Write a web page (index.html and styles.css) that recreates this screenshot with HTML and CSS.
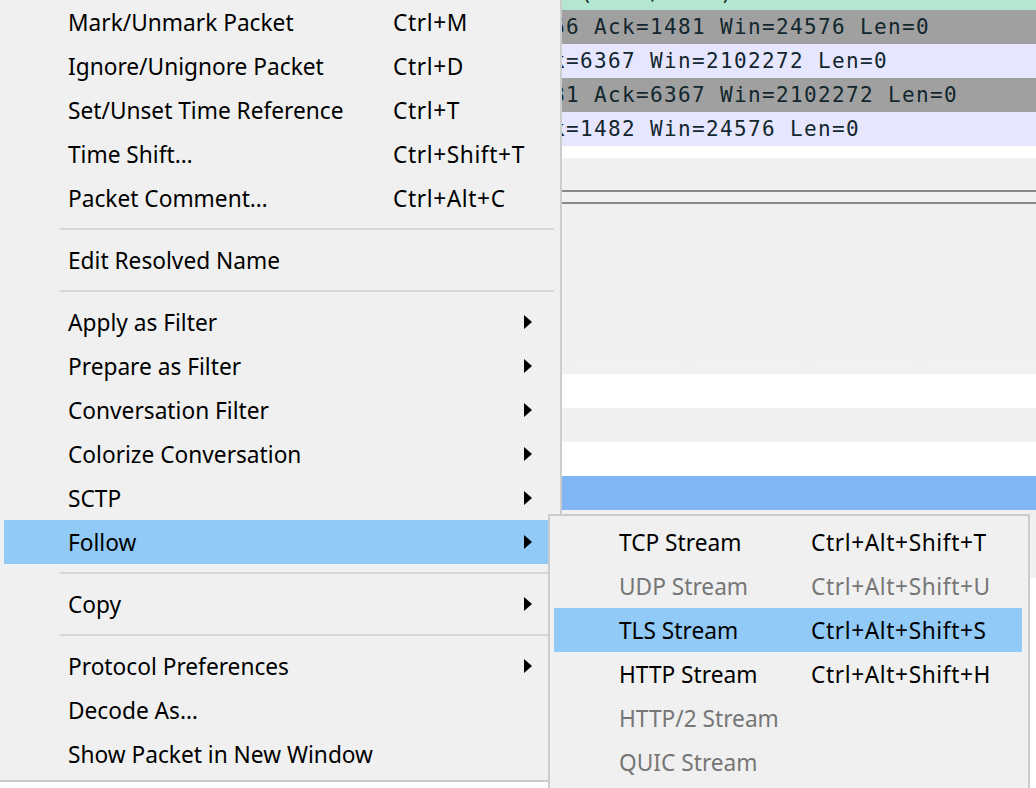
FILE: index.html
```html
<!DOCTYPE html>
<html lang="en">
<head>
<meta charset="utf-8">
<title>Wireshark context menu</title>
<link rel="stylesheet" href="styles.css">
</head>
<body>
<div class="app">
  <div class="packet-list">
    <div class="prow http">K (text/html)</div>
    <div class="prow synfin">66 Ack=1481 Win=24576 Len=0</div>
    <div class="prow tcp">k=6367 Win=2102272 Len=0</div>
    <div class="prow synfin">81 Ack=6367 Win=2102272 Len=0</div>
    <div class="prow tcp">k=1482 Win=24576 Len=0</div>
  </div>
  <div class="splitter">
    <div class="grip"></div>
    <div class="grip"></div>
  </div>
  <div class="details">
    <div class="dhead"><span></span><span></span><span></span><span></span></div>
    <div class="drow plain"></div>
    <div class="drow alt"></div>
    <div class="drow plain"></div>
    <div class="drow selected"></div>
    <div class="drow alt tall"></div>
    <div class="drow plain rest"></div>
  </div>
</div>

<div class="menu main-menu">
  <div class="item"><span class="label">Mark/Unmark Packet</span><span class="key">Ctrl+M</span></div>
  <div class="item"><span class="label">Ignore/Unignore Packet</span><span class="key">Ctrl+D</span></div>
  <div class="item"><span class="label">Set/Unset Time Reference</span><span class="key">Ctrl+T</span></div>
  <div class="item"><span class="label">Time Shift…</span><span class="key">Ctrl+Shift+T</span></div>
  <div class="item"><span class="label">Packet Comment…</span><span class="key">Ctrl+Alt+C</span></div>
  <div class="sep"></div>
  <div class="item"><span class="label">Edit Resolved Name</span></div>
  <div class="sep"></div>
  <div class="item"><span class="label">Apply as Filter</span><span class="key"></span><svg class="arrow" viewBox="0 0 8 14"><polygon points="0,0 8,7 0,14"/></svg></div>
  <div class="item"><span class="label">Prepare as Filter</span><span class="key"></span><svg class="arrow" viewBox="0 0 8 14"><polygon points="0,0 8,7 0,14"/></svg></div>
  <div class="item"><span class="label">Conversation Filter</span><span class="key"></span><svg class="arrow" viewBox="0 0 8 14"><polygon points="0,0 8,7 0,14"/></svg></div>
  <div class="item"><span class="label">Colorize Conversation</span><span class="key"></span><svg class="arrow" viewBox="0 0 8 14"><polygon points="0,0 8,7 0,14"/></svg></div>
  <div class="item"><span class="label">SCTP</span><span class="key"></span><svg class="arrow" viewBox="0 0 8 14"><polygon points="0,0 8,7 0,14"/></svg></div>
  <div class="item active"><span class="label">Follow</span><span class="key"></span><svg class="arrow" viewBox="0 0 8 14"><polygon points="0,0 8,7 0,14"/></svg></div>
  <div class="sep"></div>
  <div class="item"><span class="label">Copy</span><span class="key"></span><svg class="arrow" viewBox="0 0 8 14"><polygon points="0,0 8,7 0,14"/></svg></div>
  <div class="sep"></div>
  <div class="item"><span class="label">Protocol Preferences</span><span class="key"></span><svg class="arrow" viewBox="0 0 8 14"><polygon points="0,0 8,7 0,14"/></svg></div>
  <div class="item"><span class="label">Decode As…</span></div>
  <div class="item"><span class="label">Show Packet in New Window</span></div>
</div>

<div class="menu sub-menu">
  <div class="item"><span class="label">TCP Stream</span><span class="key">Ctrl+Alt+Shift+T</span></div>
  <div class="item disabled"><span class="label">UDP Stream</span><span class="key">Ctrl+Alt+Shift+U</span></div>
  <div class="item active"><span class="label">TLS Stream</span><span class="key">Ctrl+Alt+Shift+S</span></div>
  <div class="item"><span class="label">HTTP Stream</span><span class="key">Ctrl+Alt+Shift+H</span></div>
  <div class="item disabled"><span class="label">HTTP/2 Stream</span></div>
  <div class="item disabled"><span class="label">QUIC Stream</span></div>
</div>
</body>
</html>
```

FILE: styles.css
```css
* {
  box-sizing: border-box;
  margin: 0;
  padding: 0;
}

html,
body {
  width: 1036px;
  height: 788px;
  overflow: hidden;
}

body {
  position: relative;
  background: #f0f0f0;
  font-family: "Noto Sans", "Open Sans", sans-serif;
}

/* ---------- background: Wireshark panes ---------- */
.app {
  display: flex;
  flex-direction: column;
  height: 788px;
}

.packet-list {
  background: #ffffff;
  padding-bottom: 12px;
}

.prow {
  height: 34px;
  line-height: 34px;
  padding-left: 552px;
  white-space: pre;
  overflow: hidden;
  font-family: "DejaVu Sans Mono", monospace;
  font-size: 21px;
  letter-spacing: 1.36px;
  color: #12272e;
}

.prow.http {
  margin-top: -24px;
  background: #b4e7d2;
}

.prow.synfin {
  background: #a0a0a0;
}

.prow.tcp {
  background: #e7e6ff;
}

.splitter {
  display: flex;
  flex-direction: column;
  gap: 10px;
  padding-top: 32px;
  height: 195px;
}

.grip {
  height: 2px;
  background: #84888c;
}

.details {
  flex: 1;
  display: flex;
  flex-direction: column;
}

.dhead {
  display: flex;
  gap: 8px;
  height: 21px;
  padding-left: 575px;
}

.dhead span {
  width: 120px;
  background: #f1f1f1;
}

.drow {
  height: 34px;
}

.drow.plain {
  background: #ffffff;
}

.drow.alt {
  background: #f0f0f0;
}

.drow.tall {
  height: 68px;
}

.drow.selected {
  background: #80b6f5;
}

.drow.rest {
  flex: 1;
}

/* ---------- menus ---------- */
.menu {
  position: absolute;
  background: #f0f0f0;
  border: 2px solid #cccccc;
  color: #000000;
  font-size: 22.7px;
}

.main-menu {
  left: -2px;
  top: -6px;
  width: 564px;
  padding: 4px;
}

.sub-menu {
  left: 548px;
  top: 514px;
  width: 482px;
  padding: 4px 6px 4px 4px;
}

.item {
  display: grid;
  align-items: center;
  height: 44px;
  white-space: nowrap;
}

.main-menu .item {
  grid-template-columns: 325px 1fr 8px;
  padding: 0 24px 0 64px;
}

.sub-menu .item {
  grid-template-columns: 192px 1fr;
  padding-left: 65px;
}

.key {
  letter-spacing: 0.6px;
}

.item.active {
  background: #91c9f7;
}

.item.disabled {
  color: #767676;
}

.arrow {
  width: 8px;
  height: 14px;
  fill: #000000;
}

.sep {
  height: 2px;
  margin: 8px 2px 8px 56px;
  background: #d7d7d7;
}
```
